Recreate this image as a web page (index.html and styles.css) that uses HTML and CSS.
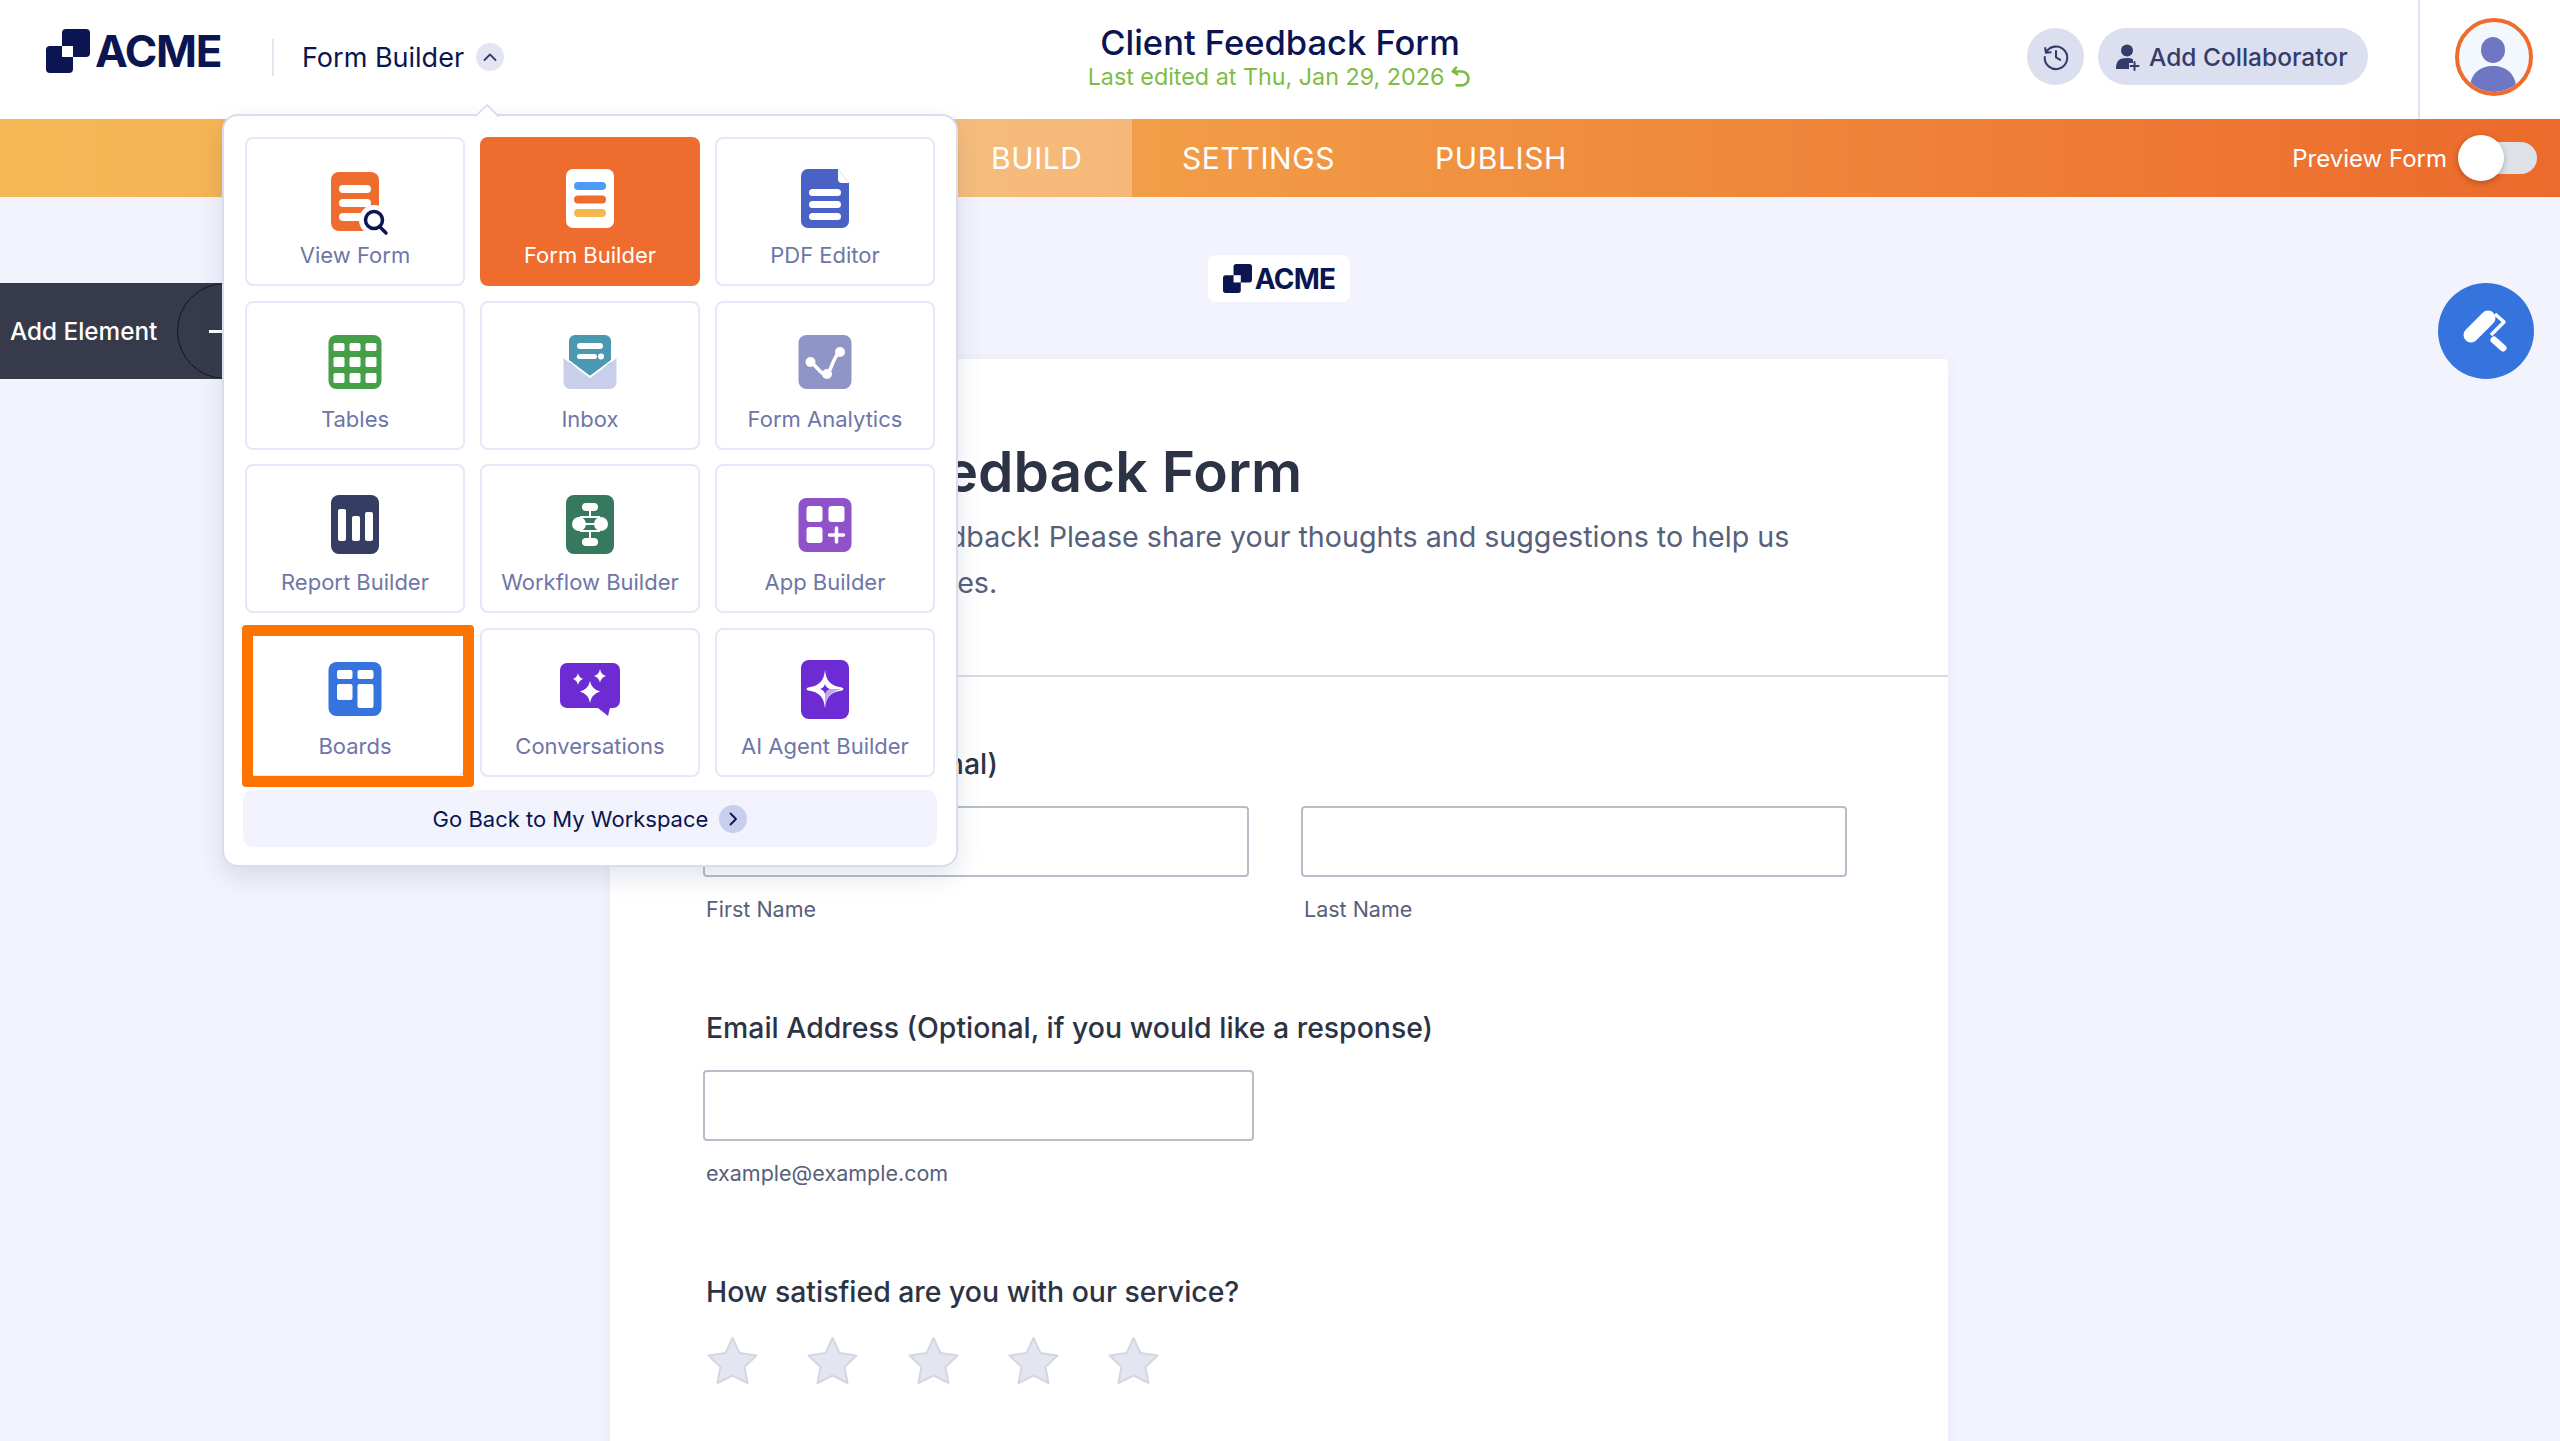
FILE: index.html

```html
<!DOCTYPE html>
<html lang="en">
<head>
    <meta charset="UTF-8">
    <title>Client Feedback Form</title>
    <link rel="stylesheet" href="styles.css">
</head>
<body>
    <header class="topbar">
        <div class="top-left">
            <div class="logo">
                <svg class="logo-mark" viewBox="0 0 44 44"><rect x="16" y="0" width="28" height="28" rx="4" fill="#0a1551"/><rect x="0" y="17" width="27" height="27" rx="4" fill="#0a1551"/><rect x="16" y="17" width="11" height="11" fill="#fff"/></svg>
                <span class="logo-text">ACME</span>
            </div>
            <div class="top-switch">
                <span>Form Builder</span>
                <span class="chev-circle"><svg viewBox="0 0 28 28"><path d="M8.5 17 14 11.5 19.500 17" fill="none" stroke="#343c6a" stroke-width="1.800" stroke-linecap="round" stroke-linejoin="round"/></svg></span>
            </div>
        </div>
        <div class="top-center">
            <div class="form-name">Client Feedback Form</div>
            <div class="last-edit">Last edited at Thu, Jan 29, 2026
                <svg viewBox="0 0 20 20"><path d="M5.500 1.500 2.500 5 6.500 7.500M3 5H10.500a6.300 6.300 0 0 1 0 12.600H6" fill="none" stroke="#7ebc45" stroke-width="2.400" stroke-linecap="round" stroke-linejoin="round"/></svg>
            </div>
        </div>
        <div class="top-right">
            <button class="round-btn"><svg viewBox="0 0 32 32"><path d="M5.500 11A12 12 0 1 1 4 16M4.500 6.500 5.300 11.500 10.300 11M16 9.500V16.500L20.500 19" fill="none" stroke="#343c6a" stroke-width="2.200" stroke-linecap="round" stroke-linejoin="round"/></svg></button>
            <button class="collab-btn">
                <svg viewBox="0 0 24 28"><circle cx="11" cy="7.500" r="6" fill="#343c6a"/><path d="M0 26c0-8 3-11 11-11 3 0 5 .5 6 1.500v3.500h-4v6z" fill="#343c6a"/><path d="M18.500 19v8M14.500 23h8" stroke="#343c6a" stroke-width="2" stroke-linecap="round"/></svg>
                <span>Add Collaborator</span>
            </button>
            <div class="avatar-wrap">
                <div class="avatar"><svg viewBox="0 0 70 70"><ellipse cx="34" cy="28" rx="12" ry="13" fill="#6f76c4"/><path d="M11 70V66c0-14 10-22 23-22s23 8 23 22v4z" fill="#6f76c4"/></svg></div>
            </div>
        </div>
    </header>

    <nav class="tabbar">
        <a class="tab active">BUILD</a>
        <a class="tab">SETTINGS</a>
        <a class="tab">PUBLISH</a>
        <div class="preview">
            <span>Preview Form</span>
            <span class="toggle"><span class="knob"></span></span>
        </div>
    </nav>

    <main class="stage">
        <div class="form-logo">
            <svg viewBox="0 0 44 44"><rect x="16" y="0" width="28" height="28" rx="4" fill="#0a1551"/><rect x="0" y="17" width="27" height="27" rx="4" fill="#0a1551"/><rect x="16" y="17" width="11" height="11" fill="#fff"/></svg>
            <span>ACME</span>
        </div>

        <section class="form-card">
            <div class="form-head">
                <h1>Client Feedback Form</h1>
                <p>We value your feedback! Please share your thoughts and suggestions to help us improve our services.</p>
            </div>
            <div class="form-body">
                <div class="field">
                    <label>Your Name (Optional)</label>
                    <div class="name-row">
                        <div class="name-col"><input class="text-in" type="text"><small>First Name</small></div>
                        <div class="name-col"><input class="text-in" type="text"><small>Last Name</small></div>
                    </div>
                </div>
                <div class="field">
                    <label>Email Address (Optional, if you would like a response)</label>
                    <input class="text-in email-in" type="text">
                    <small>example@example.com</small>
                </div>
                <div class="field">
                    <label>How satisfied are you with our service?</label>
                    <div class="stars">
                        <svg viewBox="0 0 53 49"><path class="star" d="M26.500 2 33.500 17 50.500 19.500 38.500 31 41.500 47 26.500 39.500 11.500 47 14.500 31 2.500 19.500 19.500 17z"/></svg>
                        <svg viewBox="0 0 53 49"><path class="star" d="M26.500 2 33.500 17 50.500 19.500 38.500 31 41.500 47 26.500 39.500 11.500 47 14.500 31 2.500 19.500 19.500 17z"/></svg>
                        <svg viewBox="0 0 53 49"><path class="star" d="M26.500 2 33.500 17 50.500 19.500 38.500 31 41.500 47 26.500 39.500 11.500 47 14.500 31 2.500 19.500 19.500 17z"/></svg>
                        <svg viewBox="0 0 53 49"><path class="star" d="M26.500 2 33.500 17 50.500 19.500 38.500 31 41.500 47 26.500 39.500 11.500 47 14.500 31 2.500 19.500 19.500 17z"/></svg>
                        <svg viewBox="0 0 53 49"><path class="star" d="M26.500 2 33.500 17 50.500 19.500 38.500 31 41.500 47 26.500 39.500 11.500 47 14.500 31 2.500 19.500 19.500 17z"/></svg>
                    </div>
                </div>
            </div>
        </section>
    </main>

    <div class="add-element">
        <span>Add Element</span>
        <span class="add-circle"><i></i></span>
    </div>

    <button class="paint-btn">
        <svg viewBox="0 0 96 96"><path d="M33 52 50 35" stroke="#fff" stroke-width="15" stroke-linecap="round"/><path d="M57 31 66 39 53 52" fill="none" stroke="#fff" stroke-width="3.500" stroke-linejoin="round"/><path d="M56 57 65 65" stroke="#fff" stroke-width="7" stroke-linecap="round"/></svg>
    </button>

    <div class="popup">
        <div class="popup-grid">
            <a class="app-card">
                <svg class="app-icon" viewBox="0 0 64 66"><rect x="8" y="4" width="48" height="59" rx="8" fill="#ee6c2e"/><rect x="16" y="17" width="32" height="8" rx="4" fill="#fff"/><rect x="16" y="31" width="32" height="8" rx="4" fill="#fff"/><rect x="16" y="45" width="32" height="8" rx="4" fill="#fff"/><circle cx="51" cy="52" r="15" fill="#fff"/><circle cx="51" cy="52" r="8.500" fill="#fff" stroke="#0a1551" stroke-width="3.500"/><path d="M57 59 63 65" stroke="#0a1551" stroke-width="3.500" stroke-linecap="round"/></svg>
                <span>View Form</span>
            </a>
            <a class="app-card current">
                <svg class="app-icon" viewBox="0 0 64 66"><rect x="8" y="1" width="48" height="59" rx="7" fill="#fff"/><rect x="16" y="14" width="32" height="8" rx="4" fill="#4c9bf7"/><rect x="16" y="27.500" width="32" height="8" rx="4" fill="#ee6c2e"/><rect x="16" y="41" width="32" height="8" rx="4" fill="#f5b84f"/></svg>
                <span>Form Builder</span>
            </a>
            <a class="app-card">
                <svg class="app-icon" viewBox="0 0 64 66"><path d="M15 1H45L56 15V53a7 7 0 0 1-7 7H15a7 7 0 0 1-7-7V8a7 7 0 0 1 7-7z" fill="#4a62c5"/><path d="M45 1 56 15H49a4 4 0 0 1-4-4z" fill="#fff"/><rect x="16" y="21" width="32" height="7" rx="3.500" fill="#fff"/><rect x="16" y="33" width="32" height="7" rx="3.500" fill="#fff"/><rect x="16" y="45" width="32" height="7" rx="3.500" fill="#fff"/></svg>
                <span>PDF Editor</span>
            </a>
            <a class="app-card">
                <svg class="app-icon" viewBox="0 0 64 66"><rect x="5.500" y="3" width="53" height="54" rx="8" fill="#459f48"/><g fill="#fff"><rect x="10.500" y="11" width="11" height="8" rx="1.500"/><rect x="26.500" y="11" width="11" height="8" rx="1.500"/><rect x="42.500" y="11" width="11" height="8" rx="1.500"/><rect x="10.500" y="25" width="11" height="10" rx="1.500"/><rect x="26.500" y="25" width="11" height="10" rx="1.500"/><rect x="42.500" y="25" width="11" height="10" rx="1.500"/><rect x="10.500" y="41" width="11" height="10" rx="1.500"/><rect x="26.500" y="41" width="11" height="10" rx="1.500"/><rect x="42.500" y="41" width="11" height="10" rx="1.500"/></g></svg>
                <span>Tables</span>
            </a>
            <a class="app-card">
                <svg class="app-icon" viewBox="0 0 64 66"><path d="M5.500 25 32 44 58.500 25V50a7 7 0 0 1-7 7H12.500a7 7 0 0 1-7-7z" fill="#c9cfeb"/><path d="M17 3H47a6 6 0 0 1 6 6V31L32 44 11 31V9a6 6 0 0 1 6-6z" fill="#4b98b2"/><path d="M5.500 25 32 45 58.500 25" fill="none" stroke="#fff" stroke-width="2"/><rect x="19" y="11" width="26" height="6" rx="3" fill="#fff"/><rect x="19" y="22" width="20" height="5" rx="2.500" fill="#fff"/><circle cx="43" cy="24.500" r="3" fill="#fff"/></svg>
                <span>Inbox</span>
            </a>
            <a class="app-card">
                <svg class="app-icon" viewBox="0 0 64 66"><rect x="5.500" y="3" width="53" height="54" rx="8" fill="#9095c7"/><path d="M17.500 30C24 34 31 47 35 41 39 36 40 26 46.500 20" fill="none" stroke="#fff" stroke-width="3.500" stroke-linecap="round"/><circle cx="17.500" cy="30" r="5" fill="#fff"/><circle cx="34" cy="42" r="5" fill="#fff"/><circle cx="47" cy="20" r="5" fill="#fff"/></svg>
                <span>Form Analytics</span>
            </a>
            <a class="app-card">
                <svg class="app-icon" viewBox="0 0 64 66"><rect x="8" y="0" width="48" height="59" rx="8" fill="#363d63"/><rect x="15" y="14" width="8" height="32" rx="2" fill="#fff"/><rect x="29" y="21" width="8" height="25" rx="2" fill="#fff"/><rect x="42" y="17" width="8" height="29" rx="2" fill="#fff"/></svg>
                <span>Report Builder</span>
            </a>
            <a class="app-card">
                <svg class="app-icon" viewBox="0 0 64 66"><rect x="8" y="0" width="48" height="59" rx="8" fill="#36795f"/><path d="M32 12V22M32 36V47M23 22H41V36H23z" fill="none" stroke="#fff" stroke-width="2"/><path d="M26 29H38" stroke="#fff" stroke-width="2"/><rect x="24" y="8" width="16" height="8" rx="4" fill="#fff"/><rect x="24" y="43" width="16" height="8" rx="4" fill="#fff"/><circle cx="21" cy="29" r="7" fill="#fff"/><circle cx="43" cy="29" r="7" fill="#fff"/></svg>
                <span>Workflow Builder</span>
            </a>
            <a class="app-card">
                <svg class="app-icon" viewBox="0 0 64 66"><rect x="5.500" y="3" width="53" height="54" rx="8" fill="#8f52c8"/><rect x="13.500" y="11" width="16" height="16" rx="3" fill="#fff"/><rect x="35.500" y="11" width="16" height="16" rx="3" fill="#fff"/><rect x="13.500" y="32" width="16" height="16" rx="3" fill="#fff"/><path d="M43.500 33V47M36.500 40H50.500" stroke="#fff" stroke-width="3.500" stroke-linecap="round"/></svg>
                <span>App Builder</span>
            </a>
            <a class="app-card">
                <svg class="app-icon" viewBox="0 0 64 66"><rect x="5.500" y="3" width="53" height="54" rx="8" fill="#3574dc"/><rect x="14" y="11" width="15.500" height="9" rx="2" fill="#fff"/><rect x="34.500" y="11" width="16" height="9" rx="2" fill="#fff"/><rect x="14" y="25" width="15.500" height="16" rx="2" fill="#fff"/><rect x="34.500" y="25" width="16" height="24" rx="2" fill="#fff"/></svg>
                <span>Boards</span>
            </a>
            <a class="app-card">
                <svg class="app-icon" viewBox="0 0 64 66"><path d="M9 4H55a7 7 0 0 1 7 7V42a7 7 0 0 1-7 7H52L50 57 40 49H9a7 7 0 0 1-7-7V11a7 7 0 0 1 7-7z" fill="#6d2bd3"/><path class="spark" d="M20 14Q20.800 18.500 25 20 20.800 21.500 20 26 19.200 21.500 15 20 19.200 18.500 20 14z"/><path class="spark" d="M42 10Q43 15.500 48 17 43 18.500 42 24 41 18.500 36 17 41 15.500 42 10z"/><path class="spark" d="M32 22Q33.500 30 42 32.500 33.500 35 32 44 30.500 35 22 32.500 30.500 30 32 22z"/></svg>
                <span>Conversations</span>
            </a>
            <a class="app-card">
                <svg class="app-icon" viewBox="0 0 64 66"><rect x="8" y="1" width="48" height="59" rx="8" fill="#6d2bd3"/><path d="M32 11C33 22 38 27 49 28.500Q52 30 49 31.500C38 33 33 38 32 49 31 38 26 33 15 31.500Q12 30 15 28.500C26 27 31 22 32 11z" fill="#fff"/><path d="M32 30H48C38 33 33 38 32 49z" fill="#c4a5ee"/><path d="M32 25Q33 29 37 30 33 31 32 35 31 31 27 30 31 29 32 25z" fill="#6d2bd3"/></svg>
                <span>AI Agent Builder</span>
            </a>
        </div>
        <a class="back-link">
            <span>Go Back to My Workspace</span>
            <span class="back-circle"><svg viewBox="0 0 28 28"><path d="M11.500 8.500 17 14 11.500 19.500" fill="none" stroke="#0a1551" stroke-width="1.800" stroke-linecap="round" stroke-linejoin="round"/></svg></span>
        </a>
        <div class="highlight"></div>
    </div>
</body>
</html>
```

FILE: styles.css

```css
*{
    margin: 0;
    padding: 0;
    box-sizing: border-box;
}
html,body{
    height: 1441px;
    overflow: hidden;
}
body{
    position: relative;
    background-color: #f2f3fc;
    font-family: "Inter", "Liberation Sans", sans-serif;
    color: #2c3345;
}

/* top white bar */
.topbar{
    height: 119px;
    background-color: #fff;
    display: grid;
    grid-template-columns: 1fr auto 1fr;
}
.top-left{
    display: flex;
    align-items: center;
    padding-left: 46px;
}
.logo{
    display: flex;
    align-items: center;
    gap: 5px;
    width: 226px;
    margin-top: -17px;
}
.logo-mark{
    width: 44px;
    height: 44px;
}
.logo-text{
    font-size: 44px;
    font-weight: 700;
    letter-spacing: -1.300px;
    color: #0a1551;
}
.top-switch{
    display: flex;
    align-items: center;
    gap: 12px;
    height: 37px;
    margin-top: -5px;
    padding-left: 28px;
    border-left: 2px solid #e3e5f3;
    font-size: 27px;
    color: #0a1551;
}
.chev-circle{
    width: 28px;
    height: 28px;
    border-radius: 50%;
    background-color: #e3e5f3;
}
.chev-circle svg{
    display: block;
}
.top-center{
    text-align: center;
    padding-top: 23px;
}
.form-name{
    font-size: 34.500px;
    font-weight: 500;
    line-height: 40px;
    color: #0a1551;
}
.last-edit{
    font-size: 23.300px;
    line-height: 28px;
    color: #7ebc45;
    display: flex;
    align-items: center;
    gap: 6px;
}
.last-edit svg{
    width: 22px;
    height: 22px;
}
.top-right{
    display: flex;
    align-items: center;
    justify-content: flex-end;
}
.round-btn{
    width: 57px;
    height: 57px;
    margin-top: -6px;
    border: 0;
    border-radius: 50%;
    background-color: #dcdff0;
    margin-right: 14px;
    display: flex;
    align-items: center;
    justify-content: center;
}
.round-btn svg{
    width: 30px;
    height: 30px;
}
.collab-btn{
    width: 270px;
    height: 57px;
    margin-top: -6px;
    border: 0;
    border-radius: 29px;
    background-color: #dcdff0;
    color: #343c6a;
    font-family: inherit;
    font-size: 24.500px;
    font-weight: 500;
    display: flex;
    align-items: center;
    gap: 8px;
    padding-left: 17px;
    margin-right: 50px;
}
.collab-btn svg{
    width: 26px;
    height: 28px;
}
.avatar-wrap{
    width: 142px;
    height: 119px;
    border-left: 2px solid #dfe2f0;
    padding-left: 35px;
    display: flex;
    align-items: center;
}
.avatar{
    width: 78px;
    height: 78px;
    margin-top: -6px;
    border: 4px solid #ee6c2e;
    border-radius: 50%;
    background-color: #f3f8ff;
    overflow: hidden;
}
.avatar svg{
    display: block;
    width: 100%;
    height: 100%;
}

/* orange tab bar */
.tabbar{
    height: 78px;
    background: linear-gradient(90deg, #f6b856 0%, #f3a64c 35%, #ec6a2b 100%);
    display: flex;
    align-items: stretch;
    padding-left: 942px;
    color: #fff;
}
.tab{
    display: flex;
    align-items: center;
    padding: 0 50px;
    font-size: 30px;
    letter-spacing: .6px;
}
.tab.active{
    width: 190px;
    background-color: rgba(255,255,255,.27);
    padding: 0 49px;
}
.preview{
    margin-left: auto;
    display: flex;
    align-items: center;
    font-size: 24px;
    padding-right: 23px;
}
.toggle{
    position: relative;
    width: 76px;
    height: 32px;
    margin-left: 14px;
    border-radius: 16px;
    background-color: #dfe1e8;
}
.knob{
    position: absolute;
    left: -3px;
    top: -7px;
    width: 46px;
    height: 46px;
    border-radius: 50%;
    background-color: #fff;
    box-shadow: 0 2px 6px rgba(0,0,0,.25);
}

/* form */
.stage{
    display: flex;
    flex-direction: column;
    align-items: center;
    padding-top: 58px;
    padding-right: 2px;
}
.form-logo{
    width: 142px;
    height: 47px;
    background-color: #fff;
    border-radius: 8px;
    display: flex;
    align-items: center;
    justify-content: center;
    gap: 3px;
    font-size: 28px;
    font-weight: 700;
    letter-spacing: -.8px;
    color: #0a1551;
}
.form-logo svg{
    width: 29px;
    height: 29px;
}
.form-card{
    width: 1338px;
    margin-top: 57px;
    background-color: #fff;
    border-radius: 4px 4px 0 0;
    box-shadow: 0 0 12px rgba(80,90,160,.06);
}
.form-head{
    height: 318px;
    padding: 78px 95px 0;
    border-bottom: 2px solid #d8dae5;
}
.form-head h1{
    font-size: 56.800px;
    font-weight: 600;
    line-height: 70px;
}
.form-head p{
    font-size: 28.650px;
    line-height: 46px;
    margin-top: 7px;
    color: #57607a;
}
.form-body{
    padding: 67px 93px 0;
}
.field{
    display: flex;
    flex-direction: column;
    align-items: flex-start;
    margin-bottom: 84px;
}
.field label{
    font-size: 28.400px;
    font-weight: 500;
    line-height: 40px;
    margin-left: 3px;
    margin-bottom: 22px;
}
.field small{
    font-size: 21.500px;
    line-height: 30px;
    margin: 17px 0 0 3px;
    color: #57607a;
}
.name-row{
    display: flex;
    gap: 52px;
}
.name-col{
    display: flex;
    flex-direction: column;
}
.text-in{
    width: 546px;
    height: 71px;
    border: 2px solid #b8bdc9;
    border-radius: 4px;
    background-color: #fff;
}
.email-in{
    width: 551px;
}
.stars{
    display: flex;
    gap: 47.300px;
    margin: 2px 0 0 3px;
}
.stars svg{
    width: 53px;
    height: 49px;
}
.star{
    fill: #e3e6f0;
    stroke: #d3d7e4;
    stroke-width: 2;
    stroke-linejoin: round;
}

/* things floating over the page */
.add-element{
    position: absolute;
    left: 0;
    top: 283px;
    width: 260px;
    height: 96px;
    background-color: #363a4a;
    color: #fff;
    font-size: 24.300px;
    font-weight: 500;
    display: flex;
    align-items: center;
    padding-left: 10px;
}
.add-circle{
    position: absolute;
    left: 177px;
    top: 0;
    width: 96px;
    height: 96px;
    border: 1px solid #14161f;
    border-radius: 50%;
}
.add-circle i{
    position: absolute;
    left: 31px;
    top: 46px;
    width: 34px;
    height: 3px;
    background-color: #fff;
}
.paint-btn{
    position: absolute;
    left: 2438px;
    top: 283px;
    width: 96px;
    height: 96px;
    border: 0;
    border-radius: 50%;
    background-color: #3574dc;
}
.paint-btn svg{
    display: block;
    width: 96px;
    height: 96px;
}

/* app switcher popup */
.popup{
    position: absolute;
    left: 222px;
    top: 114px;
    width: 736px;
    height: 753px;
    padding: 21px 21px 0;
    background-color: #fff;
    border: 2px solid #d9dcec;
    border-radius: 16px;
    box-shadow: 0 10px 24px rgba(60,70,120,.14);
}
.popup::before{
    content: "";
    position: absolute;
    left: 254px;
    top: -9px;
    width: 16px;
    height: 16px;
    background-color: #fff;
    border-left: 2px solid #d9dcec;
    border-top: 2px solid #d9dcec;
    border-top-left-radius: 3px;
    transform: rotate(45deg);
}
.popup-grid{
    display: grid;
    grid-template-columns: repeat(3, 220px);
    grid-auto-rows: 149px;
    gap: 14.700px 15px;
}
.app-card{
    display: flex;
    flex-direction: column;
    align-items: center;
    padding-top: 29px;
    border: 2px solid #e6e7f8;
    border-radius: 8px;
    color: #6f76a7;
    font-size: 22px;
    line-height: 30px;
}
.app-card.current{
    background-color: #ee6c2e;
    border-color: #ee6c2e;
    color: #fff;
}
.app-icon{
    width: 64px;
    height: 66px;
    flex: none;
    margin-bottom: 6px;
    overflow: visible;
}
.spark{
    fill: #fff;
}
.back-link{
    display: flex;
    align-items: center;
    justify-content: center;
    gap: 11px;
    width: 694px;
    height: 57px;
    margin: 13px 0 0 -2px;
    background-color: #f2f3fc;
    border-radius: 10px;
    color: #0a1551;
    font-size: 22px;
}
.back-circle{
    width: 28px;
    height: 28px;
    border-radius: 50%;
    background-color: #c8ceed;
}
.back-circle svg{
    display: block;
}
.highlight{
    position: absolute;
    left: 18px;
    top: 509px;
    width: 232px;
    height: 162px;
    border: 11px solid #ff7300;
    border-radius: 4px;
}
```
